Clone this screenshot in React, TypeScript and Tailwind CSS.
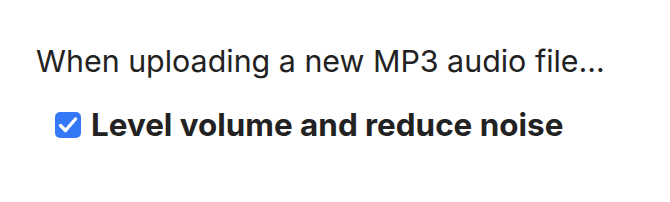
export default function App() {
  return (
    <div className="w-[670px] h-[202px] bg-white text-[#222] pt-[44px] pl-[36px]" style={{ fontFamily: 'Inter, "Liberation Sans", sans-serif' }}>
      <p className="text-[30.4px] leading-[34px]">When uploading a new MP3 audio file...</p>
      <label className="flex items-center gap-[10px] mt-[30px] ml-[19px]">
        <span className="shrink-0 w-[26px] h-[26px] rounded-[5px] bg-[#3478f6] flex items-center justify-center">
          <svg width="26" height="26" viewBox="0 0 26 26" fill="none">
            <path d="M5.5 13.5 L10.5 18.5 L20.5 7" stroke="white" strokeWidth="3.4" strokeLinecap="round" strokeLinejoin="round" />
          </svg>
        </span>
        <span className="text-[31.4px] leading-[34px] font-bold">Level volume and reduce noise</span>
      </label>
    </div>
  );
}
